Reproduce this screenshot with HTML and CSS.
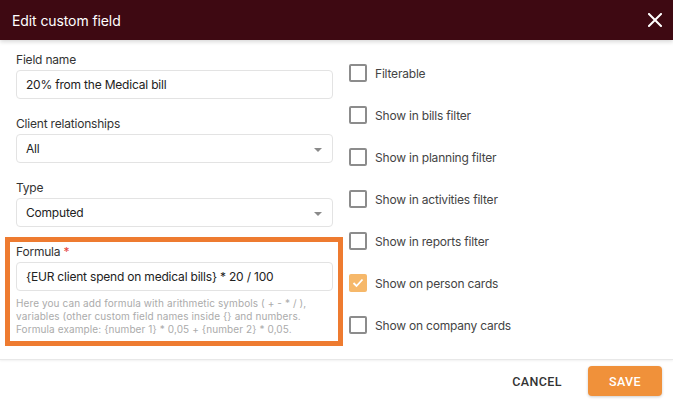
FILE: index.html
```html
<!DOCTYPE html>
<html>
<head>
    <title>Edit custom field</title>
    <link rel="stylesheet" href="styles.css">
</head>
<body>
    <div class="dialog">
        <div class="dialog-header">
            <span class="dialog-title">Edit custom field</span>
            <span class="close-btn">
                <svg width="14" height="14" viewBox="0 0 14 14"><path d="M1 1 L13 13 M13 1 L1 13" stroke="#fff" stroke-width="2" stroke-linecap="square"/></svg>
            </span>
        </div>

        <div class="dialog-body">
            <div class="form-col">
                <div class="field">
                    <label class="field-label">Field name</label>
                    <div class="input">20% from the Medical bill</div>
                </div>
                <div class="field">
                    <label class="field-label">Client relationships</label>
                    <div class="input select">All<span class="caret"></span></div>
                </div>
                <div class="field">
                    <label class="field-label">Type</label>
                    <div class="input select">Computed<span class="caret"></span></div>
                </div>
                <div class="field highlight">
                    <label class="field-label">Formula <span class="req">*</span></label>
                    <div class="input">{EUR client spend on medical bills} * 20 / 100</div>
                    <p class="hint">Here you can add formula with arithmetic symbols ( + - * / ), variables (other custom field names inside {} and numbers. Formula example: {number 1} * 0,05 + {number 2} * 0,05.</p>
                </div>
            </div>

            <div class="check-col">
                <div class="check-row"><span class="box"></span>Filterable</div>
                <div class="check-row"><span class="box"></span>Show in bills filter</div>
                <div class="check-row"><span class="box"></span>Show in planning filter</div>
                <div class="check-row"><span class="box"></span>Show in activities filter</div>
                <div class="check-row"><span class="box"></span>Show in reports filter</div>
                <div class="check-row"><span class="box checked"><svg width="12" height="10" viewBox="0 0 12 10"><path d="M1.5 5 L4.5 8 L10.5 1.5" fill="none" stroke="#fff" stroke-width="1.8"/></svg></span>Show on person cards</div>
                <div class="check-row"><span class="box"></span>Show on company cards</div>
            </div>
        </div>

        <div class="dialog-footer">
            <button class="btn btn-text">Cancel</button>
            <button class="btn btn-save">Save</button>
        </div>
    </div>
</body>
</html>
```

FILE: styles.css
```css
body {
    font-family: Inter, 'Noto Sans', sans-serif;
    background-color: #fff;
    color: #333;
    margin: 0;
}
.dialog {
    width: 673px;
    height: 402px;
    display: flex;
    flex-direction: column;
    overflow: hidden;
}
.dialog-header {
    height: 40px;
    flex-shrink: 0;
    background-color: #3e0912;
    color: #fff;
    display: flex;
    align-items: center;
    justify-content: space-between;
    padding: 0 11px 0 12px;
    box-shadow: 0 2px 4px rgba(0, 0, 0, 0.15);
    position: relative;
    z-index: 1;
}
.dialog-title {
    font-size: 14px;
    letter-spacing: -0.1px;
}
.close-btn {
    display: flex;
}
.dialog-body {
    display: grid;
    grid-template-columns: 317px 1fr;
    column-gap: 16px;
    padding: 12px 16px 0;
    height: 307px;
    border-bottom: 1px solid #e8e8e8;
    box-shadow: 0 1px 2px rgba(0, 0, 0, 0.06);
}
.form-col {
    display: flex;
    flex-direction: column;
    gap: 17px;
}
.field-label {
    display: block;
    font-size: 12px;
    letter-spacing: -0.2px;
    line-height: 15px;
    color: #333;
    margin-bottom: 3px;
}
.req {
    color: #e4423a;
}
.input {
    height: 29px;
    box-sizing: border-box;
    border: 1px solid #e3e3e3;
    border-radius: 4px;
    padding: 0 9px;
    font-size: 12px;
    letter-spacing: -0.2px;
    color: #222;
    display: flex;
    align-items: center;
    position: relative;
}
.caret {
    position: absolute;
    right: 10px;
    top: 13px;
    border-left: 4px solid transparent;
    border-right: 4px solid transparent;
    border-top: 4px solid #8a8a8a;
}
.highlight {
    margin: -7px -10px 0 -11px;
    padding: 2px 5px 5px 6px;
    border: 5px solid #ee7b30;
}
.hint {
    margin: 6px 0 0;
    font-size: 10px;
    letter-spacing: 0.1px;
    line-height: 13px;
    color: #ababab;
}
.check-col {
    display: flex;
    flex-direction: column;
}
.check-row {
    height: 42px;
    display: flex;
    align-items: center;
    font-size: 12px;
    letter-spacing: -0.2px;
    color: #444;
}
.box {
    width: 18px;
    height: 18px;
    box-sizing: border-box;
    border: 2px solid #8c8c8c;
    border-radius: 2px;
    margin-right: 8px;
    display: flex;
    align-items: center;
    justify-content: center;
}
.box.checked {
    background-color: #f6b86a;
    border-color: #f6b86a;
}
.dialog-footer {
    flex: 1;
    display: flex;
    justify-content: flex-end;
    align-items: center;
    gap: 14px;
    padding: 0 11px 0 0;
}
.btn {
    font-family: Roboto, 'Liberation Sans', sans-serif;
    font-size: 12.5px;
    font-weight: 500;
    letter-spacing: 0.4px;
    text-transform: uppercase;
    border: none;
    background: none;
    height: 30px;
    padding: 0 12px;
    border-radius: 4px;
    cursor: pointer;
}
.btn-text {
    color: #333;
}
.btn-save {
    background-color: #f0913a;
    color: #fff;
    width: 74px;
    box-shadow: 0 1px 3px rgba(0, 0, 0, 0.2);
}
```
